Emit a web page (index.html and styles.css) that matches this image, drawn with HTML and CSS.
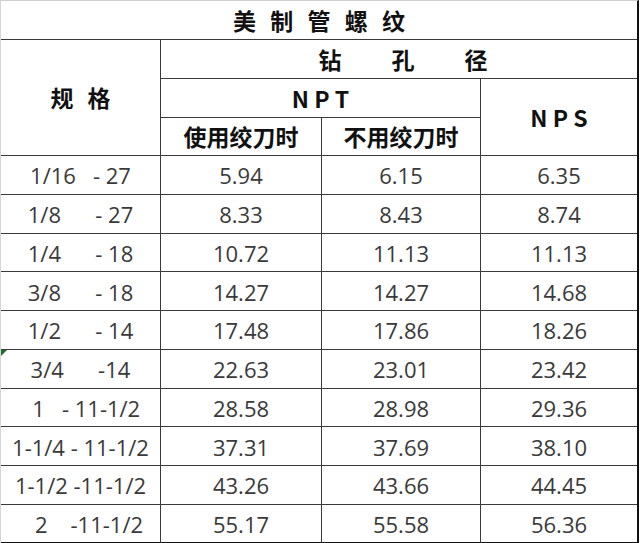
FILE: index.html
```html
<!DOCTYPE html>
<html lang="zh">
<head>
<meta charset="utf-8">
<title>美制管螺纹</title>
<link rel="stylesheet" href="styles.css">
</head>
<body>
<div class="sheet">
  <div class="cell title hd">美 制 管 螺 纹</div>
  <div class="cell spec hd">规 格</div>
  <div class="cell drill hd"><span>钻</span><span>孔</span><span>径</span></div>
  <div class="cell npt hd latin">N P T</div>
  <div class="cell nps hd latin last">N P S</div>
  <div class="cell hd">使用绞刀时</div>
  <div class="cell hd">不用绞刀时</div>

  <div class="cell lbl">1/16   - 27</div><div class="cell num">5.94</div><div class="cell num">6.15</div><div class="cell num last">6.35</div>
  <div class="cell lbl">1/8      - 27</div><div class="cell num">8.33</div><div class="cell num">8.43</div><div class="cell num last">8.74</div>
  <div class="cell lbl">1/4      - 18</div><div class="cell num">10.72</div><div class="cell num">11.13</div><div class="cell num last">11.13</div>
  <div class="cell lbl">3/8      - 18</div><div class="cell num">14.27</div><div class="cell num">14.27</div><div class="cell num last">14.68</div>
  <div class="cell lbl">1/2      - 14</div><div class="cell num">17.48</div><div class="cell num">17.86</div><div class="cell num last">18.26</div>
  <div class="cell lbl flag">3/4      -14</div><div class="cell num">22.63</div><div class="cell num">23.01</div><div class="cell num last">23.42</div>
  <div class="cell lbl">  1   - 11-1/2</div><div class="cell num">28.58</div><div class="cell num">28.98</div><div class="cell num last">29.36</div>
  <div class="cell lbl">1-1/4 - 11-1/2</div><div class="cell num">37.31</div><div class="cell num">37.69</div><div class="cell num last">38.10</div>
  <div class="cell lbl">1-1/2 -11-1/2</div><div class="cell num">43.26</div><div class="cell num">43.66</div><div class="cell num last">44.45</div>
  <div class="cell lbl bottom">   2    -11-1/2</div><div class="cell num bottom">55.17</div><div class="cell num bottom">55.58</div><div class="cell num last bottom">56.36</div>
</div>
</body>
</html>
```
FILE: styles.css
```css
html, body {
  margin: 0;
  padding: 0;
  background: #ffffff;
}

.sheet {
  display: grid;
  grid-template-columns: 160px 161px 159px 156px;
  grid-template-rows: 39px 39px 39px 38px repeat(10, 38.75px);
  width: 639px;
  box-sizing: border-box;
  border-top: 1px solid #cfcfcf;
  border-left: 1px solid #d6d6d6;
  border-right: 2px solid #111111;
  font-family: "Noto Sans CJK SC", "Noto Sans", sans-serif;
  color: #333333;
}

.cell {
  box-sizing: border-box;
  border-right: 1px solid #3a3a3a;
  border-bottom: 1px solid #3a3a3a;
  display: flex;
  align-items: center;
  justify-content: center;
  position: relative;
  white-space: pre;
  font-size: 24px;
  line-height: 1;
}

.cell.last {
  border-right: none;
}

.cell.bottom {
  border-bottom: 2px solid #111111;
}

.hd {
  font-weight: 700;
  color: #111111;
  font-size: 23px;
}

.title {
  grid-column: 1 / 5;
  border-right: none;
  word-spacing: 9px;
}

.spec {
  grid-row: 2 / 5;
  word-spacing: 9px;
}

.drill {
  grid-column: 2 / 5;
  border-right: none;
  gap: 50px;
  padding-left: 8px;
}

.npt {
  grid-column: 2 / 4;
}

.nps {
  grid-column: 4 / 5;
  grid-row: 3 / 5;
}

.latin {
  font-size: 23px;
}

.num,
.lbl {
  font-family: "Open Sans", "Liberation Sans", sans-serif;
  font-weight: 400;
  font-size: 22px;
  color: #3a3a3a;
  padding-top: 1px;
}

.flag::before {
  content: "";
  position: absolute;
  left: 0;
  top: 0;
  border-top: 6px solid #1e6e2c;
  border-right: 6px solid transparent;
}
```
